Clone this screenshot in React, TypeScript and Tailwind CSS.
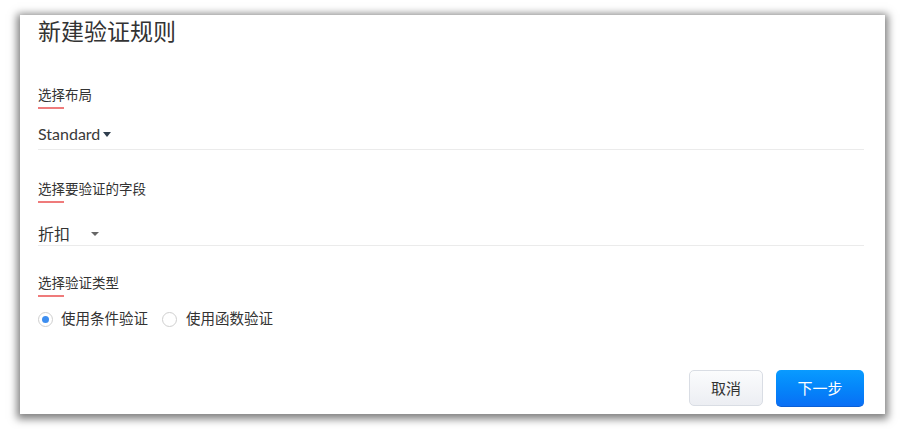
export default function App() {
  const font = { fontFamily: '"Lato", "Noto Sans CJK SC", sans-serif' };

  return (
    <div className="w-[905px] h-[429px] bg-white pt-[15px] pl-[20px]" style={font}>
      <div className="w-[865px] h-[399px] bg-white shadow-[0_2px_8px_3px_rgba(0,0,0,0.5)] pl-[18px] pr-[21px] flex flex-col">
        {/* Title */}
        <h1 className="h-[32px] leading-[32px] text-[23px] text-[#333]">新建验证规则</h1>

        {/* Layout */}
        <div className="mt-[38px] h-[20px] leading-[20px] text-[13.5px] text-[#333]">选择布局</div>
        <div className="mt-[2px] w-[26px] h-[2px] bg-[#ef7b7b]" />
        <div className="mt-[13px] h-[28px] border-b border-[#ebebeb] flex items-start">
          <span className="leading-[24px] text-[16px] text-[#3a3a3a]">Standard</span>
          <span className="ml-[3px] mt-[10px] w-0 h-0 border-l-[4px] border-r-[4px] border-t-[5px] border-l-transparent border-r-transparent border-t-[#2f3e4e]" />
        </div>

        {/* Field */}
        <div className="mt-[29px] h-[20px] leading-[20px] text-[13.5px] text-[#333]">选择要验证的字段</div>
        <div className="mt-[2px] w-[26px] h-[2px] bg-[#ef7b7b]" />
        <div className="mt-[20px] h-[23px] border-b border-[#ebebeb] flex items-start">
          <span className="leading-[22px] text-[16px] text-[#333] w-[53px]">折扣</span>
          <span className="mt-[9px] w-0 h-0 border-l-[4px] border-r-[4px] border-t-[4px] border-l-transparent border-r-transparent border-t-[#666]" />
        </div>

        {/* Type */}
        <div className="mt-[27px] h-[20px] leading-[20px] text-[13.5px] text-[#333]">选择验证类型</div>
        <div className="mt-[2px] w-[26px] h-[2px] bg-[#ef7b7b]" />
        <div className="mt-[12px] h-[20px] flex items-center text-[14.5px] text-[#333]">
          <span className="w-[15px] h-[15px] rounded-full border border-[#cfcfcf] flex items-center justify-center">
            <span className="w-[7px] h-[7px] rounded-full bg-[#3d8ef0]" />
          </span>
          <span className="ml-[8px] leading-[20px]">使用条件验证</span>
          <span className="ml-[14px] w-[15px] h-[15px] rounded-full border border-[#cfcfcf] bg-white" />
          <span className="ml-[9px] leading-[20px]">使用函数验证</span>
        </div>

        {/* Actions */}
        <div className="mt-[41px] flex justify-end gap-[13px]">
          <button className="w-[74px] h-[36px] rounded-[5px] border border-[#d9dde4] bg-gradient-to-b from-[#fbfcfd] to-[#eceef3] text-[15px] text-[#333]">
            取消
          </button>
          <button className="w-[88px] h-[37px] rounded-[5px] bg-gradient-to-b from-[#0a9bff] to-[#0a6ff5] border-b border-[#0a5fd6] text-[15px] text-white">
            下一步
          </button>
        </div>
      </div>
    </div>
  );
}
